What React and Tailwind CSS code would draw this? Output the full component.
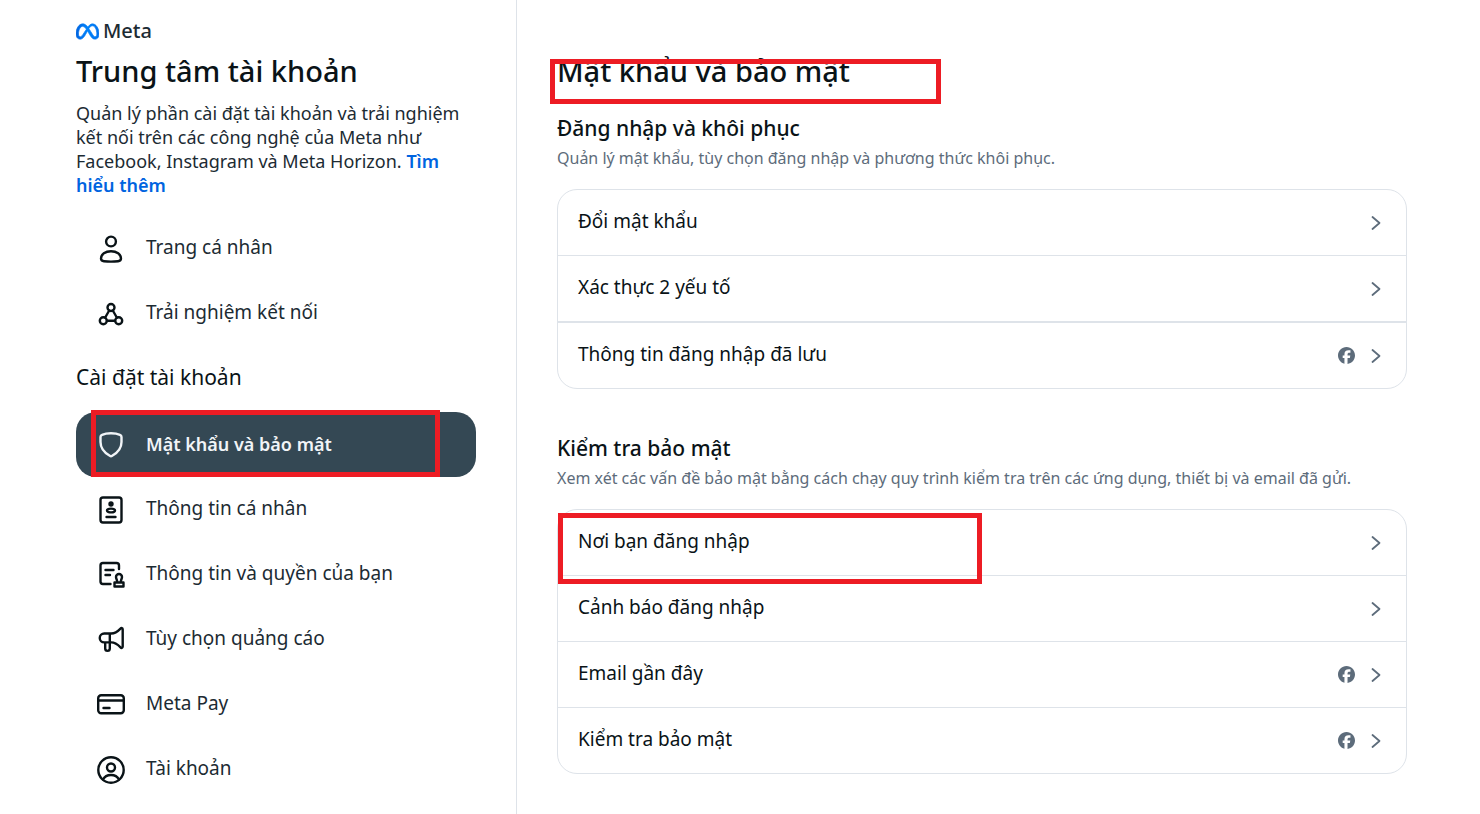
import { SiMeta } from "react-icons/si";
import { FaFacebook } from "react-icons/fa6";

const icons = {
  person: (
    <>
      <circle cx="14" cy="6.500" r="4.900" />
      <path d="M14 16.200c5.700 0 10 3.200 10 7.200 0 1.800-1 2.500-3 2.800-4.600.6-9.400.6-14 0-2-.3-3-1-3-2.800 0-4 4.300-7.200 10-7.200z" />
    </>
  ),
  connect: (
    <>
      <circle cx="14" cy="7.500" r="3.500" />
      <circle cx="6.300" cy="20.700" r="3.500" />
      <circle cx="21.700" cy="20.700" r="3.500" />
      <path d="M12.200 10.500 8.200 17.500M15.800 10.500l4 7M10 20.700h8" />
    </>
  ),
  shield: (
    <path d="M14 2.300c3.500 0 6.500.5 9 1.600 1 .4 1.500 1.100 1.500 2.200V11c0 6-3.500 10.500-9.300 13.800-.8.500-1.600.5-2.400 0C7 21.500 3.500 17 3.500 11V6.100c0-1.100.5-1.800 1.500-2.200 2.500-1.100 5.500-1.600 9-1.600z" />
  ),
  idCard: (
    <>
      <rect x="3.500" y="1.500" width="21" height="25" rx="2.500" />
      <circle cx="14" cy="8" r="2.700" fill="currentColor" stroke="none" />
      <ellipse cx="14" cy="14.500" rx="4" ry="1.900" />
      <path d="M9.500 21h9" />
    </>
  ),
  rights: (
    <>
      <path d="M13.500 23H6a2.500 2.500 0 0 1-2.500-2.500v-16A2.500 2.500 0 0 1 6 2h13.500A2.500 2.500 0 0 1 22 4.500V8M8.500 9h8M8.500 14h4.500" />
      <path d="M20.200 21.500c.4-2-1.200-3.500-1.200-5.500a3 3 0 0 1 6 0c0 2-1.600 3.500-1.200 5.500M17.500 21.500h9v4h-9z" />
    </>
  ),
  megaphone: (
    <path d="M12.800 7.500H7.200a4.400 4.400 0 0 0 0 8.900h5.600zM12.800 7.500h1.400c4 0 6.800-2.300 9.300-4.900.9-.9 2.200-.6 2.200.8v17.200c0 1.400-1.300 1.700-2.200.8-2.500-2.600-5.300-5-9.300-5h-1.400v6.200a2.300 2.300 0 0 1-4.600 0v-6.200" />
  ),
  card: (
    <>
      <rect x="1.200" y="4.200" width="25.600" height="18" rx="3" />
      <path d="M1.200 9.500h25.600M6.500 17h6" />
    </>
  ),
  account: (
    <>
      <circle cx="14" cy="14" r="12.700" />
      <circle cx="14" cy="11.500" r="4" />
      <path d="M6 23.500c1.500-3 4.400-4.500 8-4.500s6.500 1.500 8 4.500" />
    </>
  ),
};

const mainNav = [
  { icon: "person", label: "Trang cá nhân" },
  { icon: "connect", label: "Trải nghiệm kết nối" },
];

const settingsNav = [
  { icon: "shield", label: "Mật khẩu và bảo mật", active: true },
  { icon: "idCard", label: "Thông tin cá nhân" },
  { icon: "rights", label: "Thông tin và quyền của bạn" },
  { icon: "megaphone", label: "Tùy chọn quảng cáo" },
  { icon: "card", label: "Meta Pay" },
  { icon: "account", label: "Tài khoản" },
];

const sections = [
  {
    title: "Đăng nhập và khôi phục",
    text: "Quản lý mật khẩu, tùy chọn đăng nhập và phương thức khôi phục.",
    rows: [
      { label: "Đổi mật khẩu" },
      { label: "Xác thực 2 yếu tố", thick: true },
      { label: "Thông tin đăng nhập đã lưu", facebook: true },
    ],
  },
  {
    title: "Kiểm tra bảo mật",
    text: "Xem xét các vấn đề bảo mật bằng cách chạy quy trình kiểm tra trên các ứng dụng, thiết bị và email đã gửi.",
    rows: [
      { label: "Nơi bạn đăng nhập", marked: true },
      { label: "Cảnh báo đăng nhập" },
      { label: "Email gần đây", facebook: true },
      { label: "Kiểm tra bảo mật", facebook: true },
    ],
  },
];

function Icon({ name }) {
  return (
    <svg
      viewBox="0 0 28 28"
      className="size-7 shrink-0"
      fill="none"
      stroke="currentColor"
      strokeWidth="2.4"
      strokeLinecap="round"
      strokeLinejoin="round"
      aria-hidden="true"
    >
      {icons[name]}
    </svg>
  );
}

function NavItem({ icon, label, active }) {
  return (
    <a
      href="#"
      aria-current={active ? "page" : undefined}
      className={`relative flex h-[65px] items-center gap-[21px] rounded-[20px] px-[21px] ${
        active
          ? "bg-[#344854] text-lg font-semibold text-[#f1f4f7]"
          : "text-[19px] text-[#1c2b33]"
      }`}
    >
      <span className={active ? "text-[#f1f4f7]" : "text-[#0a1317]"}>
        <Icon name={icon} />
      </span>
      <span className="pb-0.5">{label}</span>
      {active && (
        <span className="absolute -top-0.5 bottom-0 left-[15px] right-9 border-[5px] border-[#ed1c24]" />
      )}
    </a>
  );
}

function Row({ label, facebook, thick, marked }) {
  return (
    <li
      className={`relative border-[#dee3e9] last:border-b-0 ${thick ? "border-b-2" : "border-b"}`}
    >
      <button className="flex h-[65px] w-full items-center justify-between pl-5 pr-6 text-left text-[19px] text-[#0a1317]">
        <span className="pb-0.5">{label}</span>
        <span className="flex items-center gap-[15px] text-[#5d6c7b]">
          {facebook && <FaFacebook size={17} />}
          <svg
            viewBox="0 0 12 16"
            className="h-4 w-3"
            fill="none"
            stroke="currentColor"
            strokeWidth="1.8"
            strokeLinecap="round"
            strokeLinejoin="round"
            aria-hidden="true"
          >
            <path d="M2.500 2 9.500 8l-7 6" />
          </svg>
        </span>
      </button>
      {marked && (
        <span className="pointer-events-none absolute -bottom-[9px] left-0 top-[3px] w-1/2 border-[5px] border-[#ed1c24]" />
      )}
    </li>
  );
}

export default function App() {
  return (
    <div className="flex min-h-screen bg-white font-['Noto_Sans',sans-serif] text-[#0a1317]">
      <aside className="w-[517px] shrink-0 border-r border-[#dee3e9] pb-3 pl-[76px] pr-10 pt-[19px]">
        <div className="flex h-6 items-center gap-1 text-xl font-medium text-[#1c2b33]">
          <svg width="0" height="0" className="absolute" aria-hidden="true">
            <linearGradient id="metaBlue">
              <stop offset="0" stopColor="#0064e0" />
              <stop offset="0.5" stopColor="#0082fb" />
              <stop offset="1" stopColor="#0072ee" />
            </linearGradient>
          </svg>
          <SiMeta
            size={23}
            fill="url(#metaBlue)"
            stroke="url(#metaBlue)"
            strokeWidth="0.7"
            aria-hidden="true"
          />
          Meta
        </div>
        <h1 className="mt-2.5 text-[29px] font-medium leading-9">
          Trung tâm tài khoản
        </h1>
        <p className="mt-3 text-lg leading-6 text-[#1c2b33]">
          Quản lý phần cài đặt tài khoản và trải nghiệm kết nối trên các công
          nghệ của Meta như Facebook, Instagram và Meta Horizon.{" "}
          <a href="#" className="font-semibold text-[#0064e0]">
            Tìm hiểu thêm
          </a>
        </p>

        <nav className="mt-[19px]">
          {mainNav.map((item) => (
            <NavItem key={item.label} {...item} />
          ))}
          <h2 className="flex h-[66px] items-center pb-0.5 text-[21px]">
            Cài đặt tài khoản
          </h2>
          {settingsNav.map((item) => (
            <NavItem key={item.label} {...item} />
          ))}
        </nav>
      </aside>

      <main className="min-w-0 flex-1 pl-10 pr-[73px] pt-[53px]">
        <div className="relative">
          <h1 className="text-[29px] font-medium leading-9">
            Mật khẩu và bảo mật
          </h1>
          <span className="absolute -bottom-[15px] -left-[7px] top-1.5 w-[391px] border-[5px] border-[#ed1c24]" />
        </div>

        {sections.map((section) => (
          <section
            key={section.title}
            className="mt-[45px] first-of-type:mt-[25px] last:pb-6"
          >
            <h2 className="text-[21px] font-medium leading-7">
              {section.title}
            </h2>
            <p className="mt-1 text-base leading-6 text-[#5d6c7b]">
              {section.text}
            </p>
            <ul className="mt-[19px] rounded-[20px] border border-[#dee3e9]">
              {section.rows.map((row) => (
                <Row key={row.label} {...row} />
              ))}
            </ul>
          </section>
        ))}
      </main>
    </div>
  );
}
